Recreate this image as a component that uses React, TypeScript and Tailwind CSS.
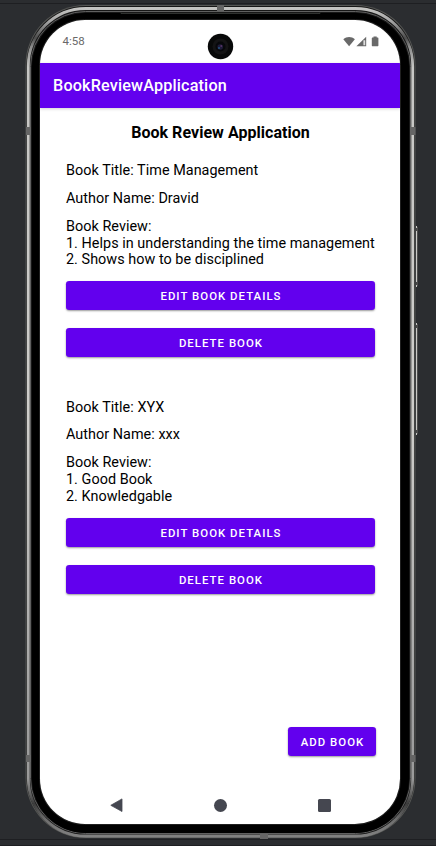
import type { ReactNode } from "react";

type Book = { title: string; author: string; review: string[] };

const books: Book[] = [
  {
    title: "Time Management",
    author: "Dravid",
    review: ["1. Helps in understanding the time management", "2. Shows how to be disciplined"],
  },
  { title: "XYX", author: "xxx", review: ["1. Good Book", "2. Knowledgable"] },
];

function Button({ children, className = "" }: { children: ReactNode; className?: string }) {
  return (
    <button
      className={`flex h-[29px] items-center justify-center rounded-[3.2px] bg-[#6200ee] pl-px pt-[1px] text-[11.4px] leading-4 font-medium tracking-[1.03px] text-white shadow-[0_1px_2px_rgba(0,0,0,0.4)] ${className}`}
    >
      {children}
    </button>
  );
}

function BookEntry({ book }: { book: Book }) {
  return (
    <article className="flex h-[236.5px] flex-col text-[14.4px] leading-[16.9px] tracking-[0.035px]">
      <p>Book Title: {book.title}</p>
      <p className="mt-[10.8px]">Author Name: {book.author}</p>
      <div className="mt-[11px] whitespace-nowrap">
        <p>Book Review:</p>
        {book.review.map((line) => (
          <p key={line}>{line}</p>
        ))}
      </div>
      <Button className="mt-[12px] w-full shrink-0">EDIT BOOK DETAILS</Button>
      <Button className="mt-[18px] w-full shrink-0">DELETE BOOK</Button>
    </article>
  );
}

/* Metal rim, antenna bands and side keys of the handset. */
function PhoneFrame() {
  return (
    <svg className="absolute inset-0" width="436" height="846" viewBox="0 0 436 846" fill="none">
      <defs>
        <linearGradient id="metal" x1="0" y1="0" x2="0" y2="846" gradientUnits="userSpaceOnUse">
          <stop offset="0.01" stopColor="#c4c4c2" />
          <stop offset="0.025" stopColor="#a5a5a5" />
          <stop offset="0.045" stopColor="#4c4c4c" />
          <stop offset="0.055" stopColor="#8a8a8a" />
          <stop offset="0.08" stopColor="#c6c6c4" />
          <stop offset="0.5" stopColor="#cecdca" />
          <stop offset="0.85" stopColor="#a0a0a0" />
          <stop offset="0.92" stopColor="#9a9a9a" />
          <stop offset="0.95" stopColor="#3c3c3c" />
          <stop offset="0.97" stopColor="#707070" />
          <stop offset="1" stopColor="#8a8a8a" />
        </linearGradient>
      </defs>
      <path d="M0 3.5H436" stroke="#1e1f22" />
      <path d="M0 839.5H436" stroke="#1e1f22" />
      <path d="M0 845.5H436" stroke="#1e1f22" />
      <rect x="25.5" y="5" width="390" height="833" rx="60" fill="#555654" />
      <rect x="26.5" y="6" width="388" height="831" rx="59" fill="#171717" />
      <rect x="28.3" y="8.5" width="384.4" height="827.5" rx="57.5" stroke="url(#metal)" strokeWidth="2.8" />
      <rect x="30.5" y="11.5" width="380" height="822" rx="55" stroke="#606060" />
      <rect x="32" y="13" width="377" height="820" rx="54" fill="#000" />
      <path d="M121 12.5V13.5H320V12.5" stroke="#3b3d3b" strokeWidth="0.8" />
      <rect x="39.5" y="19.5" width="361" height="805" rx="45" stroke="#202020" />
      <g fill="#656565">
        <rect x="217" y="5" width="7" height="6" />
        <rect x="26" y="127" width="5" height="8" />
        <rect x="410" y="127" width="5.5" height="8" />
        <rect x="26" y="755" width="5" height="7" />
        <rect x="410" y="755" width="5.5" height="7" />
        <rect x="260" y="834" width="8" height="5" />
      </g>
      <path d="M416.5 226V287M416.5 323V435" stroke="#c9c9c6" />
      <path d="M417.5 227V286M417.5 324V434" stroke="#4d4d4d" />
      <path d="M416.5 228V231M416.5 282V285M416.5 325V328M416.5 430V433" stroke="#444" />
    </svg>
  );
}

function Camera() {
  return (
    <svg className="absolute left-[167px] top-[13px]" width="27" height="27" viewBox="0 0 27 27">
      <circle cx="13.5" cy="13.5" r="12.7" fill="#080909" />
      <circle cx="13.5" cy="13.5" r="8" fill="#141415" />
      <circle cx="13.5" cy="13.5" r="5" fill="#07080b" />
      <circle cx="13.2" cy="14" r="2.8" fill="#1f1b3a" />
      <circle cx="12" cy="15" r="1.1" fill="#24517a" />
      <circle cx="14.3" cy="13" r="1" fill="#553565" />
    </svg>
  );
}

function StatusIcons() {
  return (
    <svg width="37" height="12" viewBox="0 0 37 12" fill="#696969">
      <path d="M0.3 3.2C3.7 0.2 8.5 0.2 11.9 3.2L6.1 10.3Z" />
      <path d="M13.4 10.2L23.2 0.8V10.2Z" />
      <path d="M20.4 4.2H22.2V9.2H20.4Z" fill="#dedede" />
      <path d="M28.8 2.2Q28.8 1.6 29.4 1.6H30.5V0.5H33.7V1.6H34.8Q35.4 1.6 35.4 2.2V9.6Q35.4 10.2 34.8 10.2H29.4Q28.8 10.2 28.8 9.6Z" />
    </svg>
  );
}

export default function App() {
  return (
    <div className="relative h-[846px] w-[436px] overflow-hidden bg-[#2b2d30] pl-[40px] pt-[20px] font-['Roboto','Noto_Sans',sans-serif] text-black">
      <PhoneFrame />
      <main className="relative flex h-[804px] w-[360px] flex-col overflow-hidden rounded-[45px] bg-white">
        <Camera />
        <div className="flex h-[43px] shrink-0 items-center justify-between pl-[22.5px] pr-[20px] text-[11.5px] text-[#696969]">
          <span>4:58</span>
          <StatusIcons />
        </div>
        <header className="flex h-[45px] shrink-0 items-center bg-[#6200ee] pl-[13px] pt-[2px] text-[16.2px] font-medium tracking-[0.16px] text-white shadow-[0_1px_3px_rgba(0,0,0,0.18)]">
          BookReviewApplication
        </header>
        <h1 className="mt-[15px] pl-px text-center text-[16px] font-bold leading-[19px] tracking-[0.04px]">
          Book Review Application
        </h1>
        <section className="mt-[21px] pl-[26px] pr-[25px]">
          {books.map((book) => (
            <BookEntry key={book.title} book={book} />
          ))}
        </section>
        <footer className="mt-auto flex shrink-0 flex-col">
          <Button className="mr-[24px] w-[88px] self-end">ADD BOOK</Button>
          <nav className="mt-[29px] flex h-[39px] items-start justify-between pl-[70px] pr-[69px] pt-[13px]">
            <svg width="13" height="14" viewBox="0 0 13 14">
              <path d="M0.8 7.3L12 0.9V13.5Z" fill="#454750" stroke="#454750" strokeWidth="0.8" strokeLinejoin="round" />
            </svg>
            <span className="mt-px size-[13px] rounded-full bg-[#454750]" />
            <span className="mt-px size-[13px] rounded-[1.5px] bg-[#454750]" />
          </nav>
        </footer>
      </main>
    </div>
  );
}
